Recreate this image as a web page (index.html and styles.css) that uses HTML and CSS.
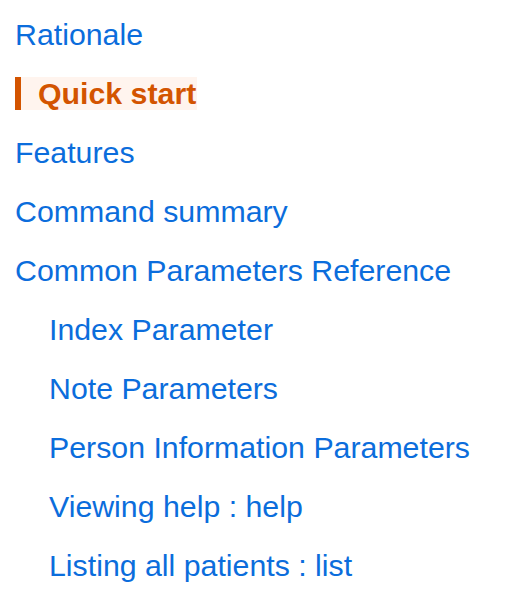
FILE: index.html
```html
<!DOCTYPE html>
<html>
<head>
<meta charset="utf-8">
<link rel="stylesheet" href="styles.css">
</head>
<body>
<nav class="toc">
  <ul class="toc-list">
    <li class="toc-item"><a class="toc-link" href="#">Rationale</a></li>
    <li class="toc-item"><a class="toc-link active" href="#">Quick start</a></li>
    <li class="toc-item"><a class="toc-link" href="#">Features</a></li>
    <li class="toc-item"><a class="toc-link" href="#">Command summary</a></li>
    <li class="toc-item"><a class="toc-link" href="#">Common Parameters Reference</a></li>
    <li class="toc-item sub"><a class="toc-link" href="#">Index Parameter</a></li>
    <li class="toc-item sub"><a class="toc-link" href="#">Note Parameters</a></li>
    <li class="toc-item sub"><a class="toc-link" href="#">Person Information Parameters</a></li>
    <li class="toc-item sub"><a class="toc-link" href="#">Viewing help : help</a></li>
    <li class="toc-item sub"><a class="toc-link" href="#">Listing all patients : list</a></li>
  </ul>
</nav>
</body>
</html>
```
FILE: styles.css
```css
html, body {
  margin: 0;
  padding: 0;
  background: #ffffff;
}
body {
  font-family: "Liberation Sans", Arial, sans-serif;
  font-size: 30.3px;
  overflow: hidden;
}
.toc-list {
  list-style: none;
  margin: 0;
  padding: 18px 0 0 15px;
  display: flex;
  flex-direction: column;
  gap: 26px;
}
.toc-item {
  display: flex;
  line-height: 33px;
}
.toc-item.sub {
  padding-left: 34px;
}
.toc-link {
  color: #0b6ddc;
  text-decoration: none;
}
.toc-link.active {
  color: #d35400;
  font-weight: bold;
  background: #fff4ee;
  border-left: 6px solid #d35400;
  margin-left: 0;
  padding-left: 17px;
  padding-right: 1px;
}
```
